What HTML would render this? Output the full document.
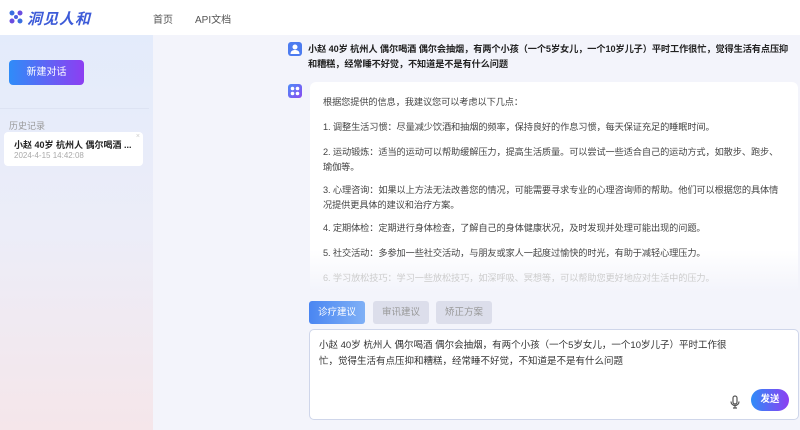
<!DOCTYPE html>
<html><head><meta charset="utf-8"><style>
*{margin:0;padding:0;box-sizing:border-box}
body{width:800px;height:430px;overflow:hidden;font-family:"Liberation Sans","Noto Sans CJK SC",sans-serif;background:#f3f4fb;position:relative;color:#333}
.hdr{position:absolute;left:0;top:0;width:800px;height:35px;background:#fff}
.logo{position:absolute;left:9px;top:8px;font-size:15px;font-weight:bold;font-style:italic;color:#3d5bd8;letter-spacing:1px}
.nav{position:absolute;top:11px;font-size:10px;color:#555}
.side{position:absolute;left:0;top:35px;width:153px;height:395px;background:linear-gradient(#e3ebfb 0%,#ecedf8 50%,#f5e6ea 100%)}
.btn{position:absolute;left:9px;top:25px;width:75px;height:25px;border-radius:4px;background:linear-gradient(90deg,#2f8cf8,#8d3ef2);color:#fff;font-size:10px;text-align:center;line-height:25px}
.line{position:absolute;left:0;top:73px;width:149px;height:1px;background:#dde3f3}
.hist{position:absolute;left:9px;top:84px;font-size:9px;color:#999}
.card{position:absolute;left:4px;top:97px;width:139px;height:34px;background:#fff;border-radius:4px}
.ct{position:absolute;left:10px;top:6px;font-size:9px;font-weight:bold;color:#222;white-space:nowrap}
.cd{position:absolute;left:10px;top:19px;font-size:8px;color:#aaa}
.av{position:absolute;width:14px;height:14px;border-radius:3px}
.q{position:absolute;left:308px;top:42px;width:486px;font-size:9.2px;font-weight:bold;color:#222;line-height:15px;letter-spacing:-0.1px}
.ans{position:absolute;left:310px;top:82px;width:488px;height:210px;background:linear-gradient(#fff 80%,#f3f4fb);border-radius:6px;overflow:hidden}
.ans p{position:absolute;left:13px;width:462px;font-size:9.2px;color:#444;line-height:15px;letter-spacing:-0.1px}
.tab{position:absolute;top:301px;height:23px;width:56px;border-radius:3px;font-size:9.5px;text-align:center;line-height:23px}
.inp{position:absolute;left:309px;top:329px;width:490px;height:91px;background:#fff;border:1px solid #cfd6ea;border-radius:5px}
.inp p{position:absolute;left:9px;top:8px;width:425px;font-size:9.5px;line-height:16px;color:#333}
.send{position:absolute;right:9px;bottom:8px;width:38px;height:22px;border-radius:11px;background:linear-gradient(90deg,#2f8cf8,#8d3ef2);color:#fff;font-size:9.5px;font-weight:bold;text-align:center;line-height:22px}
</style></head><body>
<div class="hdr">
<svg style="position:absolute;left:9px;top:10px" width="14" height="14" viewBox="0 0 14 14"><circle cx="3" cy="3" r="2.5" fill="#3a6fe0"/><circle cx="11" cy="3" r="2.5" fill="#6a4de0"/><circle cx="3" cy="11" r="2.5" fill="#6a4de0"/><circle cx="11" cy="11" r="2.5" fill="#3a6fe0"/><circle cx="7" cy="7" r="2" fill="#4a5fe0"/></svg>
<div class="logo" style="left:27px">洞见人和</div>
<div class="nav" style="left:153px">首页</div>
<div class="nav" style="left:195px">API文档</div>
</div>
<div class="side">
<div class="btn">新建对话</div>
<div class="line"></div>
<div class="hist">历史记录</div>
<div class="card"><div class="ct">小赵 40岁 杭州人 偶尔喝酒 ...</div><div class="cd">2024-4-15 14:42:08</div><span style="position:absolute;right:3px;top:1px;font-size:7px;color:#ccc">×</span></div>
</div>
<div class="av" style="left:288px;top:42px;background:#4d7cf0"><svg width="14" height="14"><circle cx="7" cy="5" r="2.5" fill="#fff"/><path d="M2.5 12c0-3 2-4 4.5-4s4.5 1 4.5 4z" fill="#fff"/></svg></div>
<div class="q">小赵 40岁 杭州人 偶尔喝酒 偶尔会抽烟，有两个小孩（一个5岁女儿，一个10岁儿子）平时工作很忙，觉得生活有点压抑和糟糕，经常睡不好觉，不知道是不是有什么问题</div>
<div class="av" style="left:288px;top:84px;background:linear-gradient(135deg,#4d8cf8,#8a4af0)"><svg width="14" height="14"><circle cx="4.5" cy="4.5" r="1.8" fill="#fff"/><circle cx="9.5" cy="4.5" r="1.8" fill="#fff"/><circle cx="4.5" cy="9.5" r="1.8" fill="#fff"/><circle cx="9.5" cy="9.5" r="1.8" fill="#fff"/></svg></div>
<div class="ans">
<p style="top:13px">根据您提供的信息，我建议您可以考虑以下几点：</p>
<p style="top:38px">1. 调整生活习惯：尽量减少饮酒和抽烟的频率，保持良好的作息习惯，每天保证充足的睡眠时间。</p>
<p style="top:63px">2. 运动锻炼：适当的运动可以帮助缓解压力，提高生活质量。可以尝试一些适合自己的运动方式，如散步、跑步、瑜伽等。</p>
<p style="top:101px">3. 心理咨询：如果以上方法无法改善您的情况，可能需要寻求专业的心理咨询师的帮助。他们可以根据您的具体情况提供更具体的建议和治疗方案。</p>
<p style="top:139px">4. 定期体检：定期进行身体检查，了解自己的身体健康状况，及时发现并处理可能出现的问题。</p>
<p style="top:164px">5. 社交活动：多参加一些社交活动，与朋友或家人一起度过愉快的时光，有助于减轻心理压力。</p>
<p style="top:189px;color:#ccc">6. 学习放松技巧：学习一些放松技巧，如深呼吸、冥想等，可以帮助您更好地应对生活中的压力。</p>
</div>
<div class="tab" style="left:309px;background:linear-gradient(90deg,#4a86f2,#7fb0f6);color:#fff">诊疗建议</div>
<div class="tab" style="left:373px;background:#dcdeeb;color:#999">审讯建议</div>
<div class="tab" style="left:436px;background:#dcdeeb;color:#999">矫正方案</div>
<div class="inp"><p>小赵 40岁 杭州人 偶尔喝酒 偶尔会抽烟，有两个小孩（一个5岁女儿，一个10岁儿子）平时工作很忙，觉得生活有点压抑和糟糕，经常睡不好觉，不知道是不是有什么问题</p>
<svg style="position:absolute;right:58px;bottom:10px" width="10" height="14" viewBox="0 0 10 14"><rect x="3" y="1" width="4" height="8" rx="2" fill="none" stroke="#555" stroke-width="1.2"/><path d="M1 6.5a4 4 0 0 0 8 0M5 10.5v2.5M3 13h4" fill="none" stroke="#555" stroke-width="1.2"/></svg>
<div class="send">发送</div></div>
</body></html>
